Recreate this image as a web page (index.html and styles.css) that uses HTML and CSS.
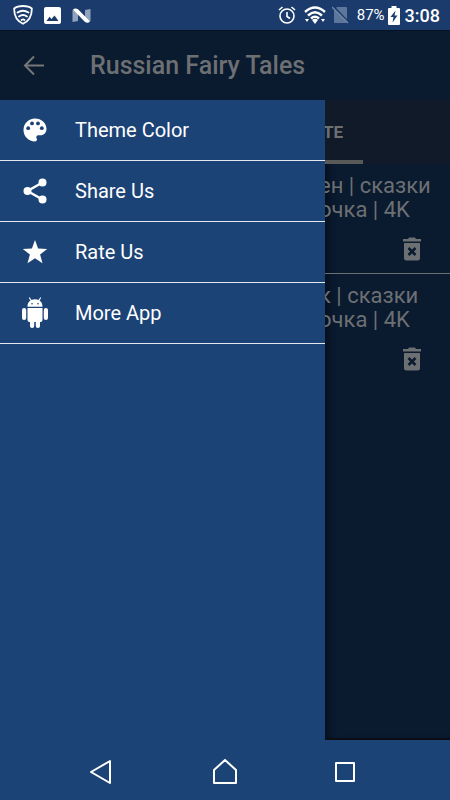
FILE: index.html
```html
<!DOCTYPE html>
<html lang="en">
<head>
<meta charset="utf-8">
<meta name="viewport" content="width=device-width, initial-scale=1">
<title>Russian Fairy Tales</title>
<link rel="stylesheet" href="styles.css">
</head>
<body>
<div class="status">
  <div class="status-group notifications">
    <svg width="20" height="20" viewBox="0 0 20 20" fill="none" stroke="#fff" stroke-width="1.8" stroke-linecap="round"><path d="M10 1C7 1 3 2 1.2 3.500C1 10 4 16 10 18.800C16 16 19 10 18.800 3.500C17 2 13 1 10 1Z"/><path d="M4.500 7.500Q10 4 15.500 7.500M6 11.500Q10 8.500 14 11.500M8.500 15Q10 13.800 11.500 15"/></svg>
    <svg width="17" height="17" viewBox="0 0 17 17"><path fill="#fff" fill-rule="evenodd" d="M2 0H15Q17 0 17 2V15Q17 17 15 17H2Q0 17 0 15V2Q0 0 2 0ZM2.500 14H14.500L10.500 8.500L7.500 12L5.500 9.800Z"/></svg>
    <svg width="19" height="15" viewBox="0 0 19 15"><path fill="#8fa3bf" d="M.5 2L6 1V13L.5 14ZM13 2L18.500 1V13L13 14Z"/><path fill="#fff" d="M1 1.500Q3.500-.8 6.500 1.800L18 13.500Q15.500 16 12.500 13.500Z"/></svg>
  </div>
  <div class="status-group">
    <svg class="alarm" width="18" height="18" viewBox="0 0 18 18" fill="none" stroke="#fff" stroke-width="1.6"><circle cx="9" cy="10" r="7"/><path d="M9 6V10.500L12 12.500M1 4L4.500 1M17 4L13.500 1"/></svg>
    <svg class="wifi" width="22" height="18" viewBox="0 0 22 18" fill="none" stroke="#fff" stroke-width="2.400"><path d="M1 6Q11-3 21 6M4 9.500Q11 3 18 9.500M7 12.500Q11 8.800 15 12.500"/><path fill="#fff" stroke="none" d="M8 14Q11 11.500 14 14L11 18ZM1 13H5L3 16ZM17 13H21L19 16Z"/></svg>
    <svg width="17" height="18" viewBox="0 0 17 18"><path fill="#5d769b" d="M5 1H14Q15 1 15 2V16Q15 17 14 17H3Q2 17 2 16V4Z"/><path stroke="#1a3b6b" stroke-width="2" d="M1 0L17 17"/><path stroke="#7188a8" stroke-width="1.400" d="M0 1L16 17"/></svg>
    <span class="percent">87%</span>
    <svg class="battery" width="12" height="19" viewBox="0 0 12 19"><path fill="#fff" d="M3.500 0H8.500V2H11Q12 2 12 3V18Q12 19 11 19H1Q0 19 0 18V3Q0 2 1 2H3.500Z"/><path fill="#1a3b6b" d="M7.500 4.500L2.500 11H5.500L4.500 16.500L9.500 9.500H6.500Z"/></svg>
    <time class="clock">3:08</time>
  </div>
</div>
<header class="appbar">
  <button class="back" aria-label="Back"><svg width="24" height="24" viewBox="0 0 24 24" fill="none" stroke="#757779" stroke-width="2"><path d="M22 11.500H3M12 2.500L3 11.500L12 20.500"/></svg></button>
  <h1>Russian Fairy Tales</h1>
</header>
<div class="content">
  <nav class="drawer">
    <button class="entry"><svg width="30" height="32" viewBox="-1 0 30 32"><path fill="#fff" d="M14 4.500C7.400 4.500 2.500 9.700 2.500 16S7.600 27.500 14 27.500C15.200 27.500 16 26.700 16 25.600C16 24.600 15.300 24.200 15.300 23.200C15.300 22.100 16.100 21.300 17.200 21.300H19.500C23 21.300 25.500 18.500 25.500 15C25.500 9 20.300 4.500 14 4.500Z"/><g fill="#1c4376"><circle cx="7.200" cy="14.200" r="1.900"/><circle cx="11" cy="9.400" r="1.900"/><circle cx="17" cy="9.400" r="1.900"/><circle cx="20.800" cy="14.200" r="1.900"/></g></svg>Theme Color</button>
    <button class="entry"><svg width="30" height="32" viewBox="-1 0 30 32" fill="#fff"><path fill="none" stroke="#fff" stroke-width="2.500" d="M21.500 7.500L6.500 16L21.500 24.500"/><circle cx="21.500" cy="7.500" r="4"/><circle cx="6.500" cy="16" r="4"/><circle cx="21.500" cy="24.500" r="4"/></svg>Share Us</button>
    <button class="entry"><svg width="30" height="32" viewBox="-1 0 30 32" fill="#fff"><path d="M14 4L17.100 12.500L26.200 12.900L19.100 18.600L21.500 27.300L14 22.300L6.500 27.300L8.900 18.600L1.800 12.900L10.900 12.500Z"/></svg>Rate Us</button>
    <button class="entry"><svg width="30" height="32" viewBox="-1 0 30 32" fill="#fff"><path d="M6.500 9.800C6.500 5 9.500 2.300 14 2.300S21.500 5 21.500 9.800ZM6.500 11H21.500V23Q21.500 25 19.500 25H8.500Q6.500 25 6.500 23Z"/><path stroke="#fff" stroke-width="1.200" stroke-linecap="round" d="M10.500 4L8.500 1M17.500 4L19.500 1"/><rect x="1" y="11" width="4.200" height="12" rx="2.100"/><rect x="22.800" y="11" width="4.200" height="12" rx="2.100"/><rect x="9" y="20" width="4.200" height="11" rx="2"/><rect x="14.800" y="20" width="4.200" height="11" rx="2"/><g fill="#1c4376"><circle cx="11" cy="6.700" r=".8"/><circle cx="17" cy="6.700" r=".8"/></g></svg>More App</button>
  </nav>
  <main class="page">
    <div class="tabs"><button class="tab">TE</button></div>
    <article class="story">
      <p>ен | сказки<br>очка | 4K</p>
      <button class="delete" aria-label="Delete"><svg width="20" height="24" viewBox="0 0 20 24"><path fill="#6d7073" d="M1 2H6L7 .5H13L14 2H19V4.500H1ZM2 6H18V21Q18 23.500 15.500 23.500H4.500Q2 23.500 2 21Z"/><path stroke="#0a1a2f" stroke-width="2.500" d="M6.500 11L13.500 18M13.500 11L6.500 18"/></svg></button>
    </article>
    <article class="story">
      <p>к | сказки<br>очка | 4K</p>
      <button class="delete" aria-label="Delete"><svg width="20" height="24" viewBox="0 0 20 24"><path fill="#6d7073" d="M1 2H6L7 .5H13L14 2H19V4.500H1ZM2 6H18V21Q18 23.500 15.500 23.500H4.500Q2 23.500 2 21Z"/><path stroke="#0a1a2f" stroke-width="2.500" d="M6.500 11L13.500 18M13.500 11L6.500 18"/></svg></button>
    </article>
  </main>
</div>
<footer class="navbar">
  <button aria-label="Back"><svg width="36" height="26" viewBox="0 0 36 26" fill="none" stroke="#fff" stroke-width="2" stroke-linejoin="round"><path d="M28 2V24L9 13Z"/></svg></button>
  <button aria-label="Home"><svg width="26" height="26" viewBox="0 0 26 26" fill="none" stroke="#fff" stroke-width="2" stroke-linejoin="round"><path d="M2 24V11L13 1L24 11V24Z"/></svg></button>
  <button aria-label="Recent apps"><svg width="26" height="26" viewBox="0 0 26 26" fill="none" stroke="#fff" stroke-width="2" stroke-linejoin="round"><path d="M4 4H22V22H4Z"/></svg></button>
</footer>
</body>
</html>
```
FILE: styles.css
```css
* {
  box-sizing: border-box;
}

body {
  margin: 0;
  min-height: 100vh;
  display: flex;
  flex-direction: column;
  background: #0a1a2f;
  color: #fff;
  font-family: Roboto, sans-serif;
}

button {
  margin: 0;
  padding: 0;
  border: 0;
  background: none;
  color: inherit;
  font: inherit;
}

svg {
  display: block;
  flex: none;
}

.status {
  height: 30px;
  padding: 0 10px 0 13px;
  display: flex;
  align-items: center;
  justify-content: space-between;
  background: #1a3b6b;
}

.status-group {
  display: flex;
  align-items: center;
}

.notifications {
  gap: 11px;
}

.alarm {
  margin-right: 8px;
}

.wifi {
  margin-right: 6px;
}

.percent {
  margin-left: 8px;
  margin-right: 3px;
  font-size: 15px;
}

.battery {
  margin-right: 5px;
}

.clock {
  font-size: 18px;
  font-weight: 500;
}

.appbar {
  height: 70px;
  padding-left: 22px;
  display: flex;
  align-items: center;
  gap: 44px;
  border-top: 1px solid #071323;
  color: #6d7073;
}

.appbar h1 {
  margin: 0;
  font-size: 25px;
  font-weight: 500;
}

.content {
  flex: 1;
  display: flex;
}

.drawer {
  width: 325px;
  flex: none;
  display: flex;
  flex-direction: column;
  position: relative;
  z-index: 1;
  background: #1c4376;
}

.entry {
  height: 61px;
  padding-left: 20px;
  display: flex;
  align-items: center;
  gap: 25px;
  border-bottom: 1px solid #e4e8f0;
  font-size: 20px;
  text-align: left;
}

.page {
  flex: 1;
  overflow: hidden;
  border-bottom: 2px solid #0b0d13;
  box-shadow: inset 8px 0 8px -6px #050c17;
  color: #6d7073;
}

.tabs {
  height: 64px;
  display: flex;
  background: #101a28;
}

.tab {
  width: 38px;
  padding-top: 4px;
  border-bottom: 4px solid #59595a;
  font-size: 17px;
  font-weight: 700;
  text-align: left;
  text-indent: -2px;
}

.story {
  height: 110px;
  padding: 10px 28px 0 0;
  display: flex;
  flex-direction: column;
  gap: 15px;
  border-bottom: 1px solid #6d7073;
}

.story:last-child {
  border-bottom: 0;
}

.story p {
  margin: 0 0 0 -6px;
  font-size: 22px;
  line-height: 24px;
  white-space: nowrap;
}

.delete {
  align-self: flex-end;
}

.navbar {
  height: 60px;
  padding: 3px 10px 0 0;
  display: flex;
  align-items: center;
  justify-content: center;
  gap: 94px;
  background: #1c4376;
}
```
